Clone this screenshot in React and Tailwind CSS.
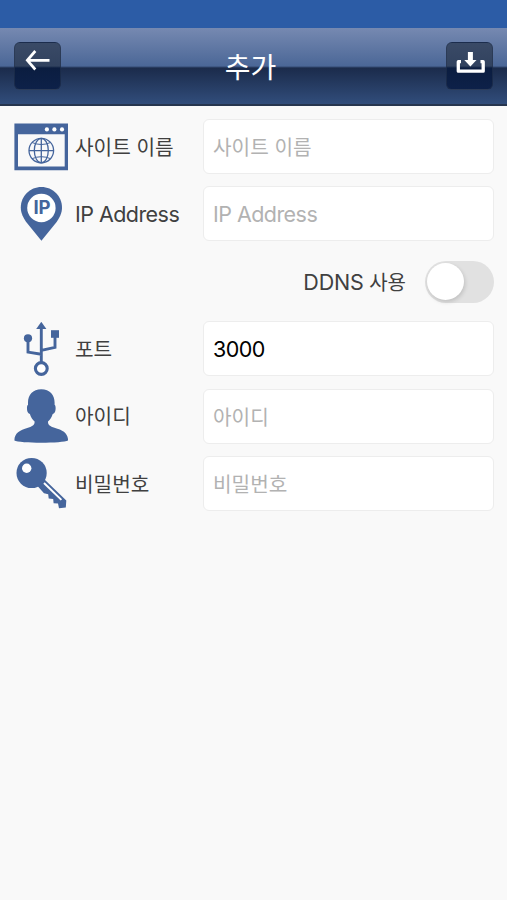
import React from 'react'
import clsx from 'clsx'

const SiteIcon = () => (
  <svg viewBox="0 0 54 54" className="w-[54px] h-[54px]">
    <path fill="#45659c" fillRule="evenodd" d="M0.4 3.5H54V50.3H0.4ZM4 14.2V46.5H50.7V14.2Z" />
    <g fill="#fff">
      <circle cx="32.9" cy="9.4" r="2.1" />
      <circle cx="40.4" cy="9.4" r="2.1" />
      <circle cx="48" cy="9.4" r="2.1" />
    </g>
    <g fill="none" stroke="#45659c" strokeWidth="1.3">
      <circle cx="27.3" cy="30.6" r="12.3" />
      <ellipse cx="27.3" cy="30.6" rx="7" ry="12.3" />
      <path d="M27.3 18.3V42.9M15 30.6H39.6" />
      <path d="M18 22.5Q27.3 26.5 36.6 22.5M18 38.7Q27.3 34.7 36.6 38.7" strokeWidth="1" />
    </g>
  </svg>
)

const PinIcon = () => (
  <svg viewBox="0 0 54 54" className="w-[54px] h-[54px]">
    <path
      fill="#45659c"
      d="M27.4 0.1C16 0.1 6.8 9.3 6.8 20.6C6.8 26.5 9.5 31 12 34.8L27.4 53.8L42.8 34.8C45.3 31 48 26.5 48 20.6C48 9.3 38.8 0.1 27.4 0.1Z"
    />
    <circle cx="27.4" cy="21" r="14.2" fill="#fff" />
    <text x="28" y="27.4" textAnchor="middle" fill="#45659c" className="font-['Inter',sans-serif] text-[18.5px] font-bold">
      IP
    </text>
  </svg>
)

const UsbIcon = () => (
  <svg viewBox="0 0 54 54" className="w-[54px] h-[54px]">
    <g fill="#45659c">
      <path d="M27.3 -0.2L32.4 7H22.2Z" />
      <circle cx="14" cy="16.3" r="4.1" />
      <path d="M37 8.2H45V15.8H37Z" />
    </g>
    <g fill="none" stroke="#45659c" strokeWidth="2.9">
      <path d="M27.3 5V40M14 17V30.1L27.3 32.2M41 15V25.4L27.3 28.3" />
      <circle cx="27.3" cy="46.5" r="5.9" fill="#fff" strokeWidth="3.1" />
    </g>
  </svg>
)

const UserIcon = () => (
  <svg viewBox="0 0 54 54" className="w-[54px] h-[54px]">
    <path
      fill="#45659c"
      d="M27.3 0.2C18.8 0.2 14 6 14 13.5V15.8C12.6 16.8 12.7 21 13.8 23.2C14.4 24.4 15.4 24.6 15.9 25C16.8 28 18.4 30.6 20.6 32.4C20.8 36 18.6 37.4 14 38.8C5.5 41.3 0.6 44 0.4 51.5C5 54.5 49.5 54.5 54.1 51.5C53.9 44 49 41.3 40.5 38.8C36 37.4 33.8 36 34 32.4C36.2 30.6 37.8 28 38.7 25C39.2 24.6 40.2 24.4 40.8 23.2C41.9 21 42 16.8 40.6 15.8V13.5C40.6 6 35.8 0.2 27.3 0.2Z"
    />
  </svg>
)

const KeyIcon = () => (
  <svg viewBox="0 0 54 54" className="w-[54px] h-[54px]">
    <path
      fill="#45659c"
      d="M30 23L52.3 44.6L51.8 51.6L45 52.2L44 47.5L39.6 47.3L39.2 43L34.7 42.5L34.2 38.3L30 37.2L23.5 30Z"
    />
    <circle cx="17.6" cy="17" r="15.1" fill="#45659c" />
    <circle cx="12.7" cy="12.3" r="4.7" fill="#fff" />
    <path d="M30 27L47.4 43.9" stroke="#fff" strokeWidth="2" />
  </svg>
)

const Header = () => (
  <header>
    <div className="h-7 bg-[#2c5ca6]" />
    <div className="h-[78px] border-b-2 border-[#26354e] bg-[linear-gradient(to_bottom,#7689b1_0px,#4b6797_38px,#1b2b4b_40px,#314d7b_76px)] flex justify-between px-[14px] pt-[14px]">
      <button
        type="button"
        className="w-[47px] h-12 rounded-md border border-[#24344f]/60 bg-[linear-gradient(to_bottom,#3a4a66_0px,#31425f_23px,#0b1d40_25px,#0d2149_46px)]"
      >
        <svg viewBox="0 0 45 46" className="w-[45px] h-[46px]" fill="none" stroke="#fff" strokeWidth="2.7">
          <path d="M34.5 17.3H12.5M20.3 8L12.3 17.3L20.3 26.5" />
        </svg>
      </button>
      <h1 className="h-12 pt-px pr-[6px] leading-[50px] text-[28px] text-white">추가</h1>
      <button
        type="button"
        className="w-[47px] h-12 rounded-md border border-[#24344f]/60 bg-[linear-gradient(to_bottom,#3a4a66_0px,#31425f_23px,#0b1d40_25px,#0d2149_46px)]"
      >
        <svg viewBox="0 0 45 46" className="w-[45px] h-[46px]">
          <path d="M20.9 9H25.9V17H29.5L23.4 23.5L17.3 17H20.9Z" fill="#fff" />
          <path
            d="M14 18.7H11.3V28.2H36.2V18.7H33.5"
            fill="none"
            stroke="#fff"
            strokeWidth="3.3"
            strokeLinejoin="round"
          />
        </svg>
      </button>
    </div>
  </header>
)

const fields = [
  { name: 'site', label: '사이트 이름', icon: SiteIcon },
  { name: 'ip', label: 'IP Address', icon: PinIcon, latin: true },
  { name: 'port', label: '포트', icon: UsbIcon },
  { name: 'id', label: '아이디', icon: UserIcon },
  { name: 'password', label: '비밀번호', icon: KeyIcon, type: 'password' }
]

const Field = ({ field, value, onChange }) => {
  const Icon = field.icon
  return (
    <div className="flex items-center h-[54px]">
      <Icon />
      <label
        htmlFor={field.name}
        className={clsx(
          'w-[135px] pl-[7px] text-[#404040] whitespace-nowrap',
          field.latin ? 'text-[21.5px] tracking-[-0.55px]' : 'pt-[3px] text-[20.2px]'
        )}
      >
        {field.label}
      </label>
      <input
        id={field.name}
        type={field.type || 'text'}
        className={clsx(
          'w-[291px] h-[55px] px-[9px] bg-white border border-[#ededed] rounded-md text-black placeholder:text-[#b2b2b2] outline-none',
          field.latin || value ? 'text-[21.5px] tracking-[-0.55px]' : 'pt-[2px] text-[20.2px]'
        )}
        placeholder={field.label}
        value={value}
        onChange={(e) => onChange(field.name, e.target.value)}
      />
    </div>
  )
}

export default function App() {
  const [formData, setFormData] = React.useState({
    site: '',
    ip: '',
    port: '3000',
    id: '',
    password: ''
  })
  const [ddns, setDdns] = React.useState(false)

  const handleChange = (name, value) => setFormData({ ...formData, [name]: value })

  const renderField = (field) => (
    <Field key={field.name} field={field} value={formData[field.name]} onChange={handleChange} />
  )

  return (
    <div className="w-full min-h-screen bg-[#f9f9f9] font-['Inter','Noto_Sans_CJK_KR',sans-serif]">
      <Header />
      <form className="flex flex-col gap-[13.4px] pl-[14px] pt-[13.5px]">
        {fields.slice(0, 2).map(renderField)}

        {/* DDNS switch */}
        <div className="flex items-center justify-end h-[54px] pr-[13px]">
          <span className="pt-px text-[20px] text-[#404040]">
            <span className="text-[21.5px] tracking-[-0.2px]">DDNS</span> 사용
          </span>
          <button
            type="button"
            role="switch"
            aria-checked={ddns}
            aria-label="DDNS 사용"
            onClick={() => setDdns(!ddns)}
            className={clsx(
              'flex items-center w-[69px] h-[42px] mt-px ml-[19px] px-[2px] rounded-full',
              ddns ? 'bg-[#45659c] justify-end' : 'bg-[#e1e1e1]'
            )}
          >
            <span className="w-[37px] h-[37px] rounded-full bg-white shadow-[1px_2px_4px_rgba(0,0,0,0.15)]" />
          </button>
        </div>

        {fields.slice(2).map(renderField)}
      </form>
    </div>
  )
}
